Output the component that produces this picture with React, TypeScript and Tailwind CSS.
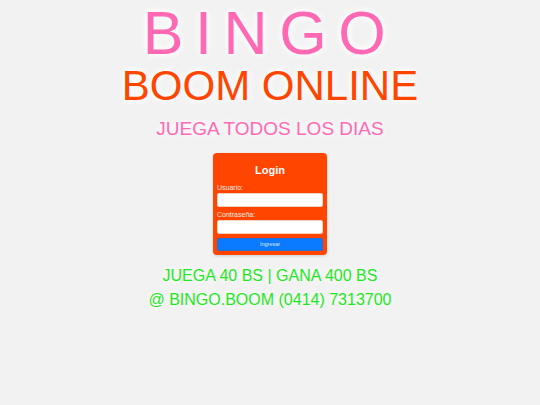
import React from 'react';

const glow = '[text-shadow:0_0_6px_#ffffff,0_0_10px_#ffffff]';

function LoginCard() {
  return (
    <form
      className="mt-[15px] flex w-[114px] flex-col rounded-[4px] bg-[#ff4500] px-[4px] pb-[4px] pt-[10px] shadow-[0_1px_3px_rgba(0,0,0,0.15)]"
      onSubmit={(e) => e.preventDefault()}
    >
      <div className="text-center text-[11px] font-bold leading-[15px] text-white">Login</div>
      <label className="mt-[5px] text-[7px] leading-[9px] text-[#ffe9e0]">Usuario:</label>
      <input className="mt-[1px] h-[14px] w-full rounded-[2px] border border-[#f3d2c6] bg-white outline-none" />
      <label className="mt-[3px] text-[7px] leading-[9px] text-[#ffe9e0]">Contraseña:</label>
      <input
        type="password"
        className="mt-[1px] h-[14px] w-full rounded-[2px] border border-[#f3d2c6] bg-white outline-none"
      />
      <button
        type="submit"
        className="mt-[3.5px] h-[13.5px] w-full rounded-[2px] border border-[#2a6fd0] bg-[#0a7bff] text-[5.5px] leading-none text-[#d8e8ff]"
      >
        Ingresar
      </button>
    </form>
  );
}

export default function App() {
  return (
    <div className="flex min-h-[405px] w-full flex-col items-center bg-[#f2f2f2] pt-[3px] font-['Liberation_Sans',Arial,sans-serif]">
      <h1 className={`text-[61px] font-normal leading-none tracking-[0.19em] text-[#ff69b4] ${glow}`}>
        BINGO
      </h1>
      <h2 className={`mt-[1px] text-[42px] font-normal leading-none text-[#ff4500] ${glow}`}>
        BOOM ONLINE
      </h2>
      <p className={`mt-[12px] text-[19px] leading-none text-[#ff69b4] ${glow}`}>JUEGA TODOS LOS DIAS</p>

      <LoginCard />

      <div className={`mt-[9px] text-center text-[16px] leading-[24px] text-[#1ee81e] ${glow}`}>
        <p>JUEGA 40 BS | GANA 400 BS</p>
        <p>@ BINGO.BOOM (0414) 7313700</p>
      </div>
    </div>
  );
}
